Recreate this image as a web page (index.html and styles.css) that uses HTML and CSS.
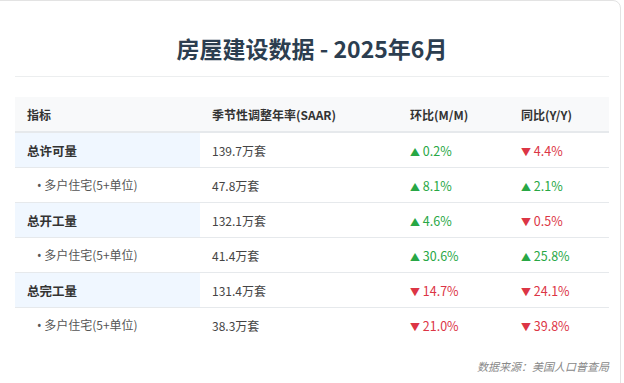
FILE: index.html
```html
<!DOCTYPE html>
<html lang="zh">
<head>
<meta charset="utf-8">
<link rel="stylesheet" href="styles.css">
</head>
<body>
<div class="card">
  <h1 class="title">房屋建设数据 - 2025年6月</h1>
  <table class="data">
    <colgroup>
      <col class="c1"><col class="c2"><col class="c3"><col class="c4">
    </colgroup>
    <thead>
      <tr><th>指标</th><th>季节性调整年率(SAAR)</th><th>环比(M/M)</th><th>同比(Y/Y)</th></tr>
    </thead>
    <tbody>
      <tr class="main"><td>总许可量</td><td>139.7万套</td><td class="up"><span class="arr">▲</span> 0.2%</td><td class="down"><span class="arr">▼</span> 4.4%</td></tr>
      <tr class="sub"><td><span class="dot">•</span> 多户住宅(5+单位)</td><td>47.8万套</td><td class="up"><span class="arr">▲</span> 8.1%</td><td class="up"><span class="arr">▲</span> 2.1%</td></tr>
      <tr class="main"><td>总开工量</td><td>132.1万套</td><td class="up"><span class="arr">▲</span> 4.6%</td><td class="down"><span class="arr">▼</span> 0.5%</td></tr>
      <tr class="sub"><td><span class="dot">•</span> 多户住宅(5+单位)</td><td>41.4万套</td><td class="up"><span class="arr">▲</span> 30.6%</td><td class="up"><span class="arr">▲</span> 25.8%</td></tr>
      <tr class="main"><td>总完工量</td><td>131.4万套</td><td class="down"><span class="arr">▼</span> 14.7%</td><td class="down"><span class="arr">▼</span> 24.1%</td></tr>
      <tr class="sub"><td><span class="dot">•</span> 多户住宅(5+单位)</td><td>38.3万套</td><td class="down"><span class="arr">▼</span> 21.0%</td><td class="down"><span class="arr">▼</span> 39.8%</td></tr>
    </tbody>
  </table>
  <p class="source">数据来源：美国人口普查局</p>
</div>
</body>
</html>
```
FILE: styles.css
```css
html, body {
  margin: 0;
  padding: 0;
  background: #ffffff;
  overflow: hidden;
}
body {
  font-family: "Noto Sans CJK SC", sans-serif;
  color: #333;
}
.card {
  margin-left: -10px;
  width: 631px;
  height: 420px;
  box-sizing: border-box;
  border: 1px solid #e3e3e3;
  border-radius: 8px;
  padding: 0 11px 0 24px;
  background: #fff;
}
.title {
  margin: 0;
  height: 76px;
  box-sizing: border-box;
  padding-top: 32px;
  text-align: center;
  font-size: 23px;
  line-height: 30px;
  font-weight: 700;
  color: #2c3e50;
  border-bottom: 1px solid #eceeef;
}
.data {
  margin-top: 20px;
  width: 594px;
  border-collapse: collapse;
  table-layout: fixed;
  font-size: 12px;
}
.c1 { width: 185px; }
.c2 { width: 198px; }
.c3 { width: 111px; }
.c4 { width: 100px; }
.data th {
  background: #f8f9fa;
  text-align: left;
  font-size: 12px;
  font-weight: 700;
  color: #333;
  height: 34px;
  padding: 0 12px;
  border-bottom: 2px solid #e6e9ec;
}
.data td {
  height: 34px;
  padding: 0 12px;
  border-bottom: 1px solid #e6e9ec;
  color: #444;
}
.data tbody tr:last-child td {
  border-bottom: none;
}
.main td:first-child {
  background: #f0f7ff;
  font-weight: 700;
  font-size: 12.5px;
  color: #333;
}
.sub td:first-child {
  padding-left: 22px;
  color: #555;
}
.dot {
  font-family: "Noto Sans", sans-serif;
}
.arr {
  font-size: 10px;
}
.data td.up { color: #28a745; font-size: 12.5px; }
.data td.down { color: #dc3545; font-size: 12.5px; }
.source {
  margin: 16px 0 0;
  text-align: right;
  font-size: 11px;
  font-style: italic;
  color: #888;
}
```
